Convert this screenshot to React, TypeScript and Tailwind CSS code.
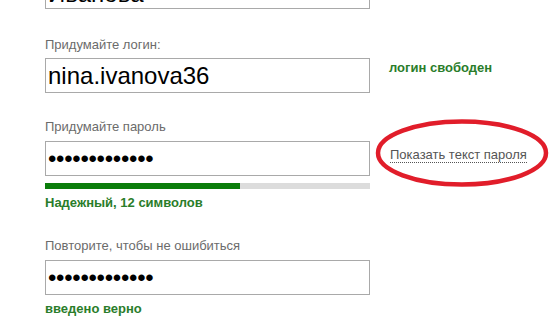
const font = { fontFamily: '"Liberation Sans", Arial, sans-serif' };

const Field = ({ value, className = '' }: { value: string; className?: string }) => (
  <div
    className={`flex h-[35px] w-[325px] items-center border border-[#a9a9a9] bg-white px-[2px] text-[24px] leading-none text-black ${className}`}
  >
    {value}
  </div>
);

const Label = ({ children, className = '' }: { children: React.ReactNode; className?: string }) => (
  <div className={`text-[13px] leading-4 text-[#6b6b6b] ${className}`}>{children}</div>
);

const Ok = ({ children, className = '' }: { children: React.ReactNode; className?: string }) => (
  <div className={`text-[13px] font-bold leading-4 text-[#2a7d2a] ${className}`}>{children}</div>
);

export default function App() {
  const dots = '•••••••••••••';
  return (
    <div className="relative h-[327px] w-[552px] overflow-hidden bg-white pl-[45px]" style={font}>
      {/* name field, cut off at the top */}
      <Field value="Иванова" className="-mt-[26px] pt-[4px]" />

      {/* login */}
      <Label className="mt-[28px]">Придумайте логин:</Label>
      <div className="mt-[5px] flex">
        <Field value="nina.ivanova36" />
        <Ok className="ml-[19px] mt-[1px] self-center pb-[17px]">логин свободен</Ok>
      </div>

      {/* password */}
      <Label className="mt-[26px]">Придумайте пароль</Label>
      <div className="mt-[6px] flex">
        <div className="w-[325px]">
          <Field value={dots} className="tracking-[-0.3px]" />
          <div className="mt-[7px] flex h-[6px] w-[325px] bg-[#dcdcdc]">
            <div className="h-full w-[195px] bg-[#0b7d0b]" />
          </div>
          <Ok className="mt-[6px]">Надежный, 12 символов</Ok>
        </div>
        <div className="ml-[20px] mt-[1px]">
          <span className="border-b border-dotted border-[#555] text-[13px] leading-4 text-[#555]">
            Показать текст пароля
          </span>
        </div>
      </div>

      {/* repeat */}
      <Label className="mt-[27px]">Повторите, чтобы не ошибиться</Label>
      <Field value={dots} className="mt-[6px] tracking-[-0.3px]" />
      <Ok className="mt-[6px]">введено верно</Ok>

      {/* red marker annotation */}
      <svg className="absolute left-[374px] top-[117px]" width="176" height="72" viewBox="0 0 176 72">
        <ellipse cx="88" cy="36" rx="84" ry="31.5" fill="none" stroke="#e11d2a" strokeWidth="4.5" />
      </svg>
    </div>
  );
}
